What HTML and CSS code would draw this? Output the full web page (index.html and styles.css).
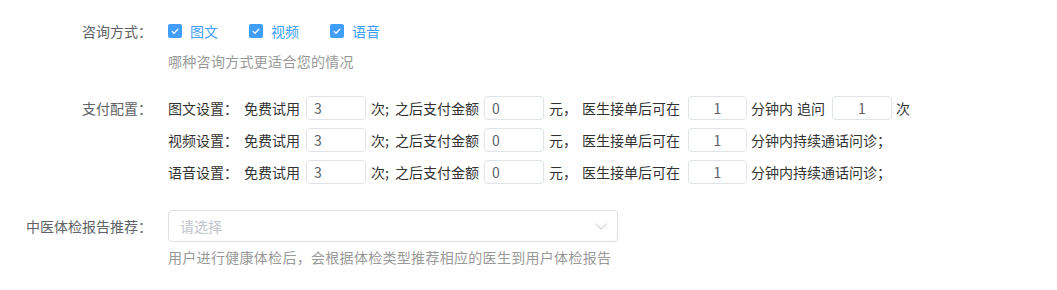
FILE: index.html
```html
<!DOCTYPE html>
<html lang="zh-CN">
<head>
<meta charset="utf-8">
<title>咨询设置</title>
<link rel="stylesheet" href="styles.css">
</head>
<body>
<form class="form">
  <div class="item item-consult">
    <label class="label">咨询方式：</label>
    <div class="content">
      <div class="checks">
        <span class="check">
          <svg class="box" width="14" height="14" viewBox="0 0 14 14"><rect x="0" y="0" width="14" height="14" rx="2" fill="#409EFF"/><path d="M3.8 7.1 L6 9.3 L10.2 4.9" fill="none" stroke="#fff" stroke-width="1.3"/></svg>
          <span class="check-label">图文</span>
        </span>
        <span class="check">
          <svg class="box" width="14" height="14" viewBox="0 0 14 14"><rect x="0" y="0" width="14" height="14" rx="2" fill="#409EFF"/><path d="M3.8 7.1 L6 9.3 L10.2 4.9" fill="none" stroke="#fff" stroke-width="1.3"/></svg>
          <span class="check-label">视频</span>
        </span>
        <span class="check">
          <svg class="box" width="14" height="14" viewBox="0 0 14 14"><rect x="0" y="0" width="14" height="14" rx="2" fill="#409EFF"/><path d="M3.8 7.1 L6 9.3 L10.2 4.9" fill="none" stroke="#fff" stroke-width="1.3"/></svg>
          <span class="check-label">语音</span>
        </span>
      </div>
      <div class="hint">哪种咨询方式更适合您的情况</div>
    </div>
  </div>

  <div class="item item-pay">
    <label class="label">支付配置：</label>
    <div class="content">
      <div class="pay-row">
        <span class="t title">图文设置：</span>
        <span class="t g6">免费试用</span>
        <span class="inp g6">3</span>
        <span class="t g5">次;</span>
        <span class="t g6">之后支付金额</span>
        <span class="inp g5">0</span>
        <span class="t g5">元，</span>
        <span class="t g5">医生接单后可在</span>
        <span class="inp center g8 w59">1</span>
        <span class="t g4">分钟内</span>
        <span class="t g4">追问</span>
        <span class="inp center g7">1</span>
        <span class="t g4">次</span>
      </div>
      <div class="pay-row">
        <span class="t title">视频设置：</span>
        <span class="t g6">免费试用</span>
        <span class="inp g6">3</span>
        <span class="t g5">次;</span>
        <span class="t g6">之后支付金额</span>
        <span class="inp g5">0</span>
        <span class="t g5">元，</span>
        <span class="t g5">医生接单后可在</span>
        <span class="inp center g8 w59">1</span>
        <span class="t g4">分钟内持续通话问诊；</span>
      </div>
      <div class="pay-row">
        <span class="t title">语音设置：</span>
        <span class="t g6">免费试用</span>
        <span class="inp g6">3</span>
        <span class="t g5">次;</span>
        <span class="t g6">之后支付金额</span>
        <span class="inp g5">0</span>
        <span class="t g5">元，</span>
        <span class="t g5">医生接单后可在</span>
        <span class="inp center g8 w59">1</span>
        <span class="t g4">分钟内持续通话问诊；</span>
      </div>
    </div>
  </div>

  <div class="item item-report">
    <label class="label">中医体检报告推荐：</label>
    <div class="content">
      <div class="select">
        <span class="placeholder">请选择</span>
        <svg class="arrow" width="12" height="7" viewBox="0 0 12 7"><polyline points="0.5,0.8 6,6 11.5,0.8" fill="none" stroke="#C0C4CC" stroke-width="1"/></svg>
      </div>
      <div class="hint hint-report">用户进行健康体检后，会根据体检类型推荐相应的医生到用户体检报告</div>
    </div>
  </div>
</form>
</body>
</html>
```

FILE: styles.css
```css
html, body {
  margin: 0;
  padding: 0;
  background: #fff;
}

body {
  font-family: "Noto Sans CJK SC", "Liberation Sans", sans-serif;
  font-size: 14px;
  color: #606266;
}

.form {
  padding-top: 11px;
}

.item {
  display: flex;
  align-items: flex-start;
  margin-bottom: 21px;
}

.item-pay {
  margin-bottom: 22px;
}

.label {
  width: 152px;
  flex: 0 0 152px;
  text-align: right;
  color: #606266;
  line-height: 32px;
  white-space: nowrap;
}

.item-consult .label {
  line-height: 40px;
}

.content {
  margin-left: 16px;
  display: flex;
  flex-direction: column;
}

.checks {
  display: flex;
  align-items: center;
  height: 40px;
}

.check {
  display: flex;
  align-items: center;
  margin-right: 31px;
}

.box {
  display: block;
  flex: 0 0 14px;
}

.check-label {
  padding-left: 8px;
  color: #409EFF;
  line-height: 20px;
}

.hint {
  color: #999;
  line-height: 20px;
  letter-spacing: 0.3px;
  white-space: nowrap;
}

.pay-row {
  display: flex;
  align-items: center;
  height: 32px;
  color: #333;
  white-space: nowrap;
}

.t {
  line-height: 20px;
}

.inp {
  box-sizing: border-box;
  width: 60px;
  height: 24px;
  border: 1px solid #E0E3EA;
  border-radius: 4px;
  padding: 0 7px;
  line-height: 22px;
  color: #606266;
  font-size: 14px;
  background: #fff;
}

.inp.center {
  text-align: center;
  padding: 0;
}

.w59 {
  width: 59px;
}

.g4 { margin-left: 4px; }
.g5 { margin-left: 5px; }
.g6 { margin-left: 6px; }
.g7 { margin-left: 7px; }
.g8 { margin-left: 8px; }

.select {
  box-sizing: border-box;
  width: 450px;
  height: 32px;
  border: 1px solid #DCDFE6;
  border-radius: 4px;
  display: flex;
  align-items: center;
  justify-content: space-between;
  padding: 0 10px 0 11px;
  background: #fff;
}

.placeholder {
  color: #C0C4CC;
  line-height: 20px;
}

.arrow {
  display: block;
}

.hint-report {
  margin-top: 5px;
}
```
